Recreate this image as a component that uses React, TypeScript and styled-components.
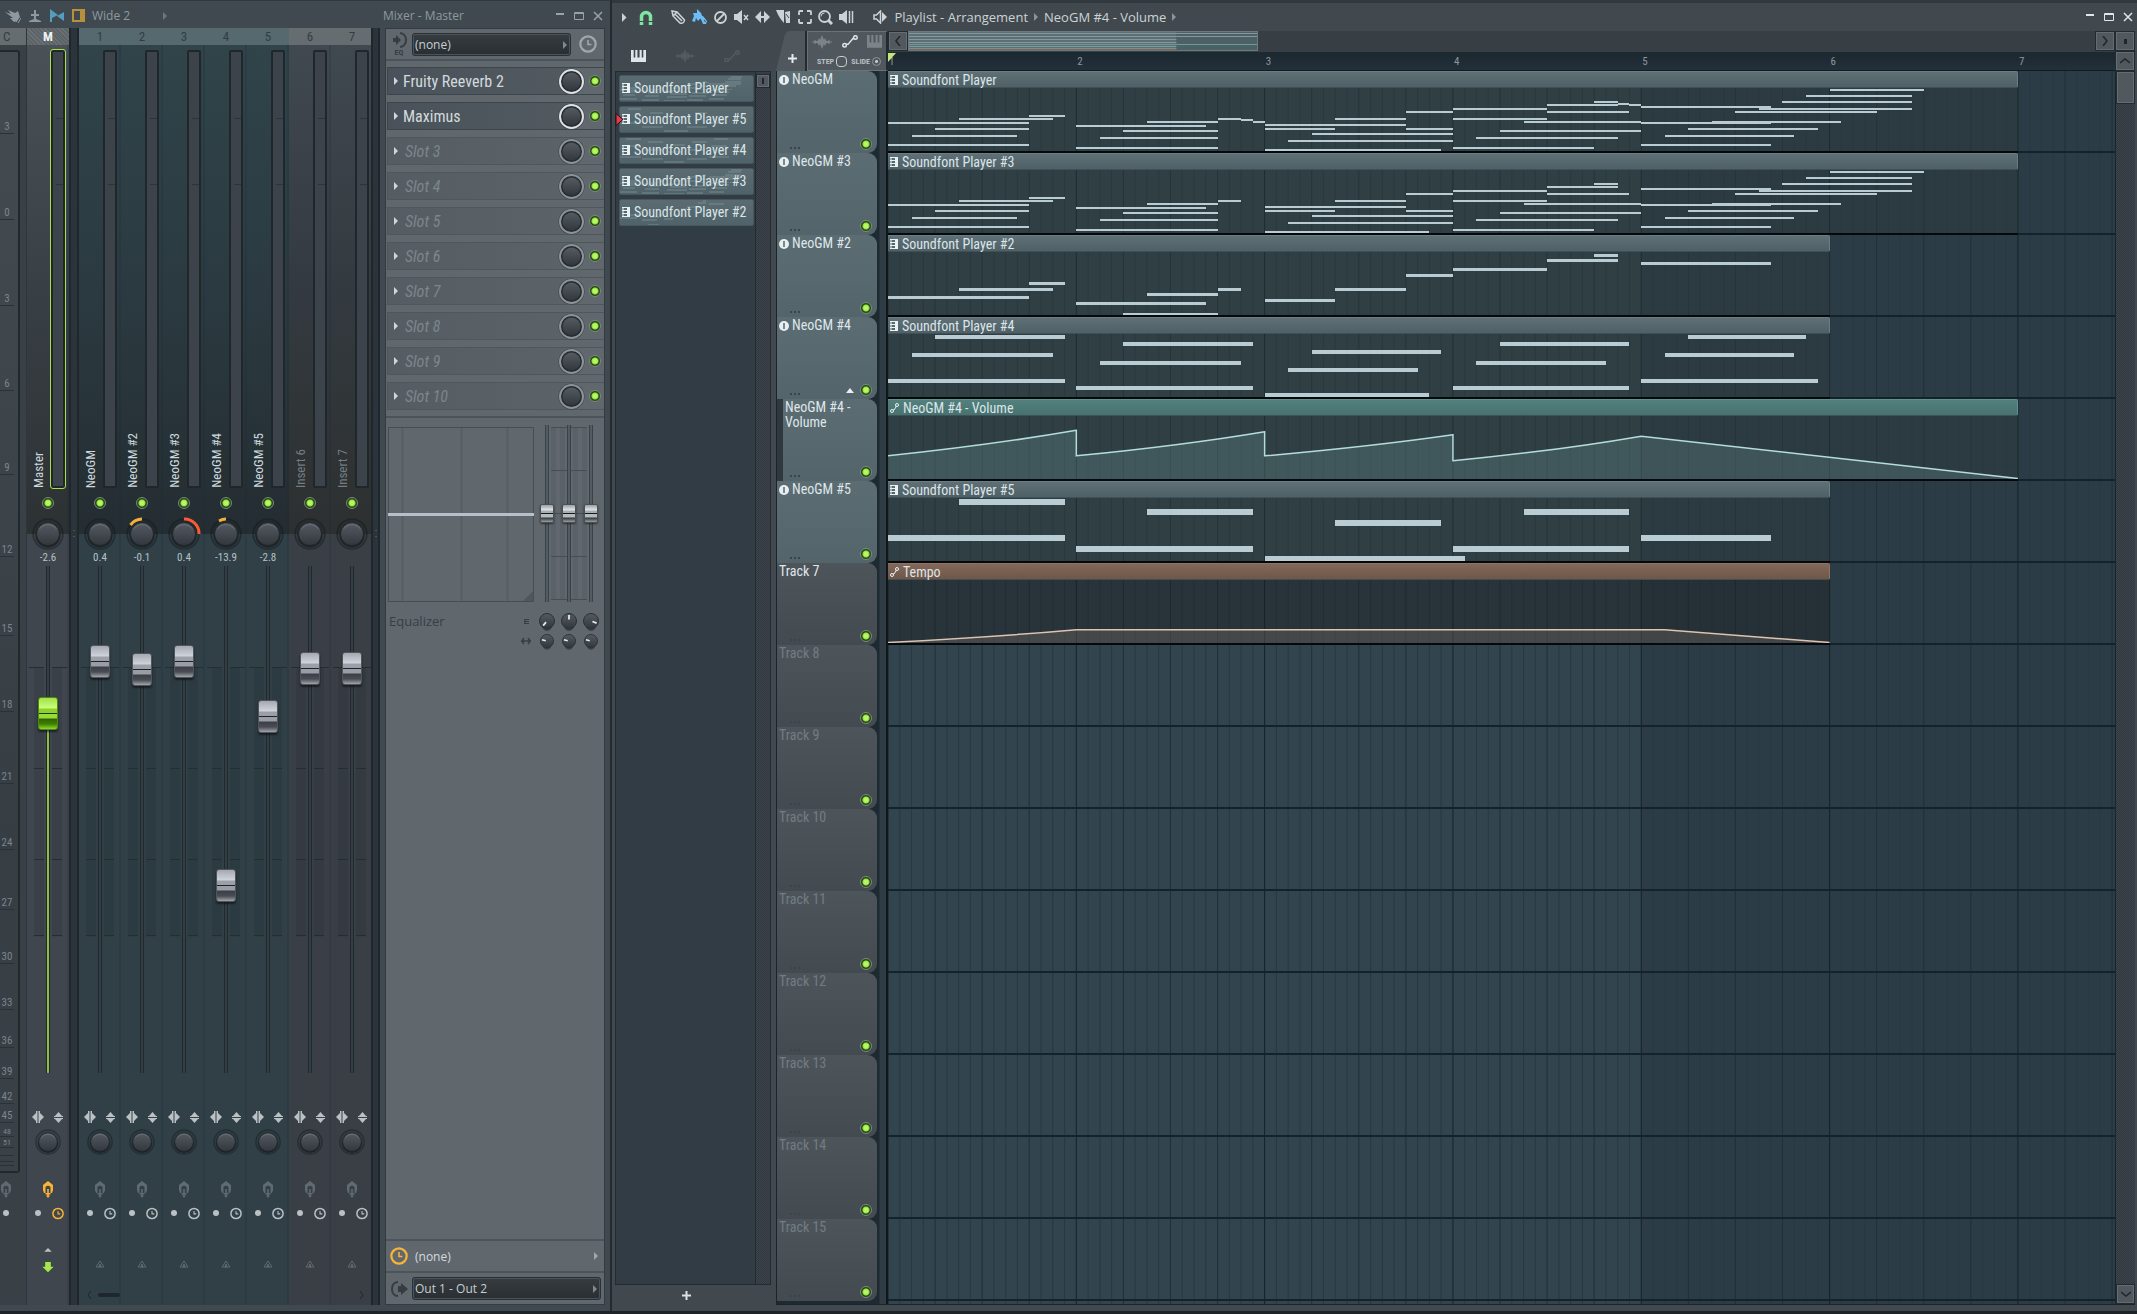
import React from "react";
import styled, { createGlobalStyle, css } from "styled-components";

const GlobalStyle = createGlobalStyle`
  * { box-sizing: border-box; }
  html, body, #root { height: 100%; }
  body {
    margin: 0;
    background: #1d2326;
    color: #c4cdd2;
    font-family: "Roboto Condensed", "Open Sans Condensed", "Liberation Sans Narrow", Roboto, sans-serif;
    font-size: 13px;
    overflow: hidden;
  }
  button, select, input { font: inherit; color: inherit; margin: 0; padding: 0; }
  button { background: none; border: 0; display: inline-flex; align-items: center; justify-content: center; }
  svg { display: block; }
  h1 { margin: 0; font: inherit; }
`;

/* ---------------------------------------------------------------- data */

type Note = [start: number, length: number, y: number];

const chordNotes: Note[] = [
  [0, 12, 52], [6, 8, 48], [12, 3, 45], [4, 8, 58], [2, 9, 65], [0, 12, 74],
  [16, 11, 55], [22, 6, 51], [28, 2, 48], [20, 8, 60], [18, 10, 67], [16, 12, 77],
  [32, 6, 54], [32, 6, 58], [38, 6, 48], [38, 6, 54], [36, 12, 63], [34, 14, 70], [32, 14, 79],
  [44, 4, 41], [44, 4, 58], [48, 8, 38], [48, 8, 48], [56, 6, 34], [60, 2, 31], [56, 7, 41],
  [54, 10, 51], [52, 12, 60], [50, 12, 67], [48, 12, 77],
  [64, 11, 36], [64, 11, 52], [70, 11, 51], [68, 11, 58], [66, 11, 65], [64, 11, 74],
  [72, 12, 41], [74, 13, 38], [76, 11, 31], [78, 9, 25], [80, 8, 19],
];
const leadNotes: Note[] = [...chordNotes, [30, 1, 49], [31, 1, 51], [46, 1, 79], [62, 1, 33], [63, 1, 34]];
const melodyNotes: Note[] = [
  [0, 12, 62], [6, 8, 54], [12, 3, 48], [16, 11, 68], [22, 6, 59], [28, 2, 54], [20, 8, 79],
  [32, 6, 65], [38, 6, 54], [44, 4, 40], [48, 8, 34], [56, 6, 25], [60, 2, 20], [64, 11, 28],
];
const padNotes: Note[] = [
  [0, 15, 64], [2, 12, 38], [4, 11, 20], [16, 15, 71], [18, 12, 46], [20, 11, 27],
  [32, 14, 78], [34, 11, 53], [36, 11, 35], [48, 15, 71], [50, 11, 46], [52, 11, 27],
  [64, 15, 64], [66, 11, 38], [68, 10, 20],
];
const bassNotes: Note[] = [
  [6, 9, 21], [0, 15, 57], [22, 9, 31], [16, 15, 68], [38, 9, 42], [32, 17, 78],
  [54, 9, 31], [48, 15, 68], [64, 11, 57],
];

const volumeLine =
  "M0 57.5 Q9 46 16 31.5 V57.5 Q25 47 32 33 V57.5 Q41 48 48 36 V62.5 Q57 52 64 37.5 L96 80.5";
const tempoLine = "M0 80.5 Q9 75 16 67.5 H66 L80 80.5";

type Tone = "steel" | "teal" | "brown";
interface Clip { name: string; length: number; tone: Tone; notes?: Note[]; thick?: number; line?: string }
interface Track { name: string; kind: "midi" | "sub" | "plain" | "empty"; expand?: boolean; clip?: Clip }

const tracks: Track[] = [
  { name: "NeoGM", kind: "midi", clip: { name: "Soundfont Player", length: 96, tone: "steel", notes: leadNotes, thick: 2 } },
  { name: "NeoGM #3", kind: "midi", clip: { name: "Soundfont Player #3", length: 96, tone: "steel", notes: chordNotes, thick: 2 } },
  { name: "NeoGM #2", kind: "midi", clip: { name: "Soundfont Player #2", length: 80, tone: "steel", notes: melodyNotes, thick: 3 } },
  { name: "NeoGM #4", kind: "midi", expand: true, clip: { name: "Soundfont Player #4", length: 80, tone: "steel", notes: padNotes, thick: 4 } },
  { name: "NeoGM #4 - Volume", kind: "sub", clip: { name: "NeoGM #4 - Volume", length: 96, tone: "teal", line: volumeLine } },
  { name: "NeoGM #5", kind: "midi", clip: { name: "Soundfont Player #5", length: 80, tone: "steel", notes: bassNotes, thick: 6 } },
  { name: "Track 7", kind: "plain", clip: { name: "Tempo", length: 80, tone: "brown", line: tempoLine } },
  ...[8, 9, 10, 11, 12, 13, 14, 15].map((n): Track => ({ name: `Track ${n}`, kind: "empty" })),
];

const patterns = [
  { name: "Soundfont Player", notes: leadNotes },
  { name: "Soundfont Player #5", notes: bassNotes, current: true },
  { name: "Soundfont Player #4", notes: padNotes },
  { name: "Soundfont Player #3", notes: chordNotes },
  { name: "Soundfont Player #2", notes: melodyNotes },
];

type StripTone = "master" | "used" | "free";
interface StripData { head: string; name: string; tone: StripTone; db?: string; level: number; pan?: [string, string] }

const master: StripData = { head: "M", name: "Master", tone: "master", db: "-2.6", level: 724 };
const inserts: StripData[] = [
  { head: "1", name: "NeoGM", tone: "used", db: "0.4", level: 834 },
  { head: "2", name: "NeoGM #2", tone: "used", db: "-0.1", level: 816, pan: ["#f5ae36", "M4.5 7 A14.5 14.5 0 0 1 16 1"] },
  { head: "3", name: "NeoGM #3", tone: "used", db: "0.4", level: 834, pan: ["#fb5b34", "M16 1 A14.5 14.5 0 0 1 31 16"] },
  { head: "4", name: "NeoGM #4", tone: "used", db: "-13.9", level: 360, pan: ["#f5ae36", "M9 3 A14.5 14.5 0 0 1 16 1"] },
  { head: "5", name: "NeoGM #5", tone: "used", db: "-2.8", level: 718 },
  { head: "6", name: "Insert 6", tone: "free", level: 818 },
  { head: "7", name: "Insert 7", tone: "free", level: 818 },
];

const scale: [string, number][] = [
  ["3", 82], ["0", 86], ["3", 86], ["6", 85], ["9", 84], ["12", 82], ["15", 79], ["18", 76], ["21", 72],
  ["24", 66], ["27", 60], ["30", 54], ["33", 46], ["36", 38], ["39", 31], ["42", 25], ["45", 19],
  ["48", 14], ["51", 11], ["", 8], ["", 6], ["", 4],
];

const slots = ["Fruity Reeverb 2", "Maximus", ...[3, 4, 5, 6, 7, 8, 9, 10].map((n) => `Slot ${n}`)];

/* ------------------------------------------------------- shared pieces */

const Led = styled.input.attrs({ type: "checkbox", defaultChecked: true })`
  appearance: none;
  width: 12px;
  height: 12px;
  flex: none;
  border-radius: 50%;
  border: 1px solid #7b8588;
  background: #27331c;
  &:checked { background: radial-gradient(circle, #b9f56a 0 2px, #8fdc3c 3px, #234a0a 4px); }
`;

const KnobBox = styled.label<{ $size: number }>`
  position: relative;
  display: block;
  flex: none;
  width: ${(p) => p.$size}px;
  height: ${(p) => p.$size}px;
  svg { width: 100%; height: 100%; overflow: visible; }
`;
const HiddenRange = styled.input.attrs({ type: "range" })`
  position: absolute;
  inset: 0;
  width: 100%;
  height: 100%;
  opacity: 0;
`;

const SharedDefs = styled.svg`
  position: absolute;
`;
const KnobDefs = () => (
  <SharedDefs width="0" height="0" aria-hidden="true">
    <defs>
      <linearGradient id="knobFace" x1="0" y1="0" x2="0" y2="1">
        <stop offset="0" stopColor="#555b62" />
        <stop offset="1" stopColor="#32373d" />
      </linearGradient>
    </defs>
  </SharedDefs>
);

function Knob({ label, size, pan }: { label: string; size: number; pan?: [string, string] }) {
  return (
    <KnobBox $size={size}>
      <svg viewBox="0 0 32 32">
        <circle cx="16" cy="16" r="15" fill="rgba(0,0,0,.08)" stroke="rgba(18,26,30,.45)" strokeWidth="1.5" />
        {pan && <path d={pan[1]} fill="none" stroke={pan[0]} strokeWidth="3" />}
        <circle cx="16" cy="17" r="12.5" fill="#1d2226" />
        <circle cx="16" cy="16" r="11.5" fill="url(#knobFace)" stroke="#22272b" strokeWidth="1" />
        <path d="M7.5 11 A10.5 10.5 0 0 1 24.5 11" fill="none" stroke="#6a7177" strokeWidth="1" />
      </svg>
      <HiddenRange aria-label={label} />
    </KnobBox>
  );
}

const Triangle = ({ color = "#c9d0d3", size = 8 }: { color?: string; size?: number }) => (
  <svg width={size / 2} height={size} viewBox="0 0 4 8"><path d="M0 0 L4 4 L0 8Z" fill={color} /></svg>
);

const ClockIcon = ({ size, color, width = 2 }: { size: number; color: string; width?: number }) => (
  <svg width={size} height={size} viewBox="0 0 16 16" fill="none" stroke={color} strokeWidth={width}>
    <circle cx="8" cy="8" r="6.8" />
    <path d="M8 4.5 V8.5 H11" strokeWidth={1.4} />
  </svg>
);

const PlugIcon = ({ color }: { color: string }) => (
  <svg width="12" height="18" viewBox="0 0 12 18">
    <path d="M6 0 L11 4 V9 L10 12 H8.500 V6 Q6 3.500 3.500 6 V12 H2 L1 9 V4Z" fill={color} />
    <path d="M5.200 8H6.800V12H8.500V13.500H6.800V14.500H8L6 17L4 14.500H5.200V13.500H3.500V12H5.200Z" fill={color} />
  </svg>
);

const PianoIcon = ({ color, size = 14 }: { color: string; size?: number }) => (
  <svg width={size} height={size * 0.86} viewBox="0 0 14 12">
    <path d="M0 0 H2.5 V7 H4 V0 H6 V7 H8 V0 H10 V7 H11.5 V0 H14 V12 H0Z" fill={color} />
  </svg>
);
const WaveIcon = ({ color }: { color: string }) => (
  <svg width="20" height="14" viewBox="0 0 20 14" fill={color}>
    <path d="M0 6.500H2L3 4.500L4 6H5.500L7 3L8 5L10 0L12 5L13 3L14.500 6H16L17 4.500L18 6.500H20V7.500H18L17 9.500L16 8H14.500L13 11L12 9L10 14L8 9L7 11L5.500 8H4L3 9.500L2 7.500H0Z" />
  </svg>
);
const AutoIcon = ({ color, size = 16 }: { color: string; size?: number }) => (
  <svg width={size} height={size * 0.8} viewBox="0 0 16 13" fill="none" stroke={color} strokeWidth="1.5">
    <circle cx="2.5" cy="10.5" r="1.8" />
    <circle cx="13.5" cy="2.5" r="1.8" />
    <path d="M4 9.5 H6 L11 3.5 H12" />
  </svg>
);
const ClipAutoIcon = () => (
  <svg width="9" height="10" viewBox="0 0 9 10" fill="none" stroke="#e8f2f5">
    <circle cx="2" cy="8" r="1.500" />
    <circle cx="7" cy="2" r="1.500" />
    <path d="M3 7H4L6 4V3" />
  </svg>
);

const WindowButtons = styled.div`
  display: flex;
  align-items: center;
  gap: 8px;
  margin-left: auto;
  button { width: 11px; height: 12px; }
`;
function WindowControls({ color }: { color: string }) {
  return (
    <WindowButtons>
      <button aria-label="Minimize"><svg width="8" height="10" viewBox="0 0 8 10"><path d="M0 3H8" stroke={color} strokeWidth="2" /></svg></button>
      <button aria-label="Maximize"><svg width="10" height="8" viewBox="0 0 10 8" fill="none" stroke={color}><path d="M.5.5H9.5V7.5H.5Z M0 1.5H10" /></svg></button>
      <button aria-label="Close"><svg width="10" height="10" viewBox="0 0 10 10" stroke={color} strokeWidth="1.5"><path d="M1 1L9 9M9 1L1 9" /></svg></button>
    </WindowButtons>
  );
}

/* --------------------------------------------------------------- mixer */

const Desktop = styled.main`
  display: flex;
  height: 100vh;
  padding-bottom: 3px;
`;

const Mixer = styled.section`
  flex: none;
  width: 612px;
  display: flex;
  flex-direction: column;
  background: #40494f;
  border-top: 1px solid #30393d;
  border-right: 2px solid #222b30;
  padding-bottom: 6px;
`;
const MixerTitle = styled.header`
  height: 27px;
  flex: none;
  display: flex;
  align-items: center;
  padding: 2px 7px 0 4px;
  color: #8e999f;
  font-family: "Open Sans", sans-serif;
  font-size: 12px;
`;
const MixerTools = styled.div`
  display: flex;
  align-items: center;
  gap: 5px;
  width: 379px;
  button { width: 17px; height: 18px; }
`;
const LayoutMenu = styled.span`
  display: flex;
  align-items: center;
  justify-content: space-between;
  width: 75px;
`;
const MixerBody = styled.div`
  flex: 1;
  min-height: 0;
  display: flex;
`;

const CurrentColumn = styled.div`
  width: 27px;
  flex: none;
  display: flex;
  flex-direction: column;
  background: #394046;
  border-right: 1px solid #2f363b;
`;
const StripHead = styled.div<{ $tone: StripTone }>`
  height: 17px;
  flex: none;
  width: 100%;
  text-align: center;
  font-size: 13px;
  line-height: 17px;
  color: #343d42;
  background: ${(p) => (p.$tone === "used" ? "#55696f" : "#666d71")};
  ${(p) => p.$tone === "master" && css`
    color: #eef2f3;
    font-weight: 700;
    background: repeating-linear-gradient(45deg, #6b7276 0 1px, #5d6468 1px 3px);
  `}
`;
const CurrentHead = styled(StripHead)`
  text-align: left;
  padding-left: 3px;
`;
const ScaleBox = styled.div`
  flex: 1;
  margin-top: 5px;
  width: 20px;
  border: 2px solid #22292e;
  border-left: 0;
  border-radius: 0 3px 3px 0;
  background: linear-gradient(#444b51, #363d43 70%, #3a4147);
`;
const ScaleRow = styled.div<{ $height: number }>`
  height: ${(p) => p.$height}px;
  width: 14px;
  border-bottom: 1px solid #2a3137;
  display: flex;
  align-items: flex-end;
  justify-content: center;
  font-size: ${(p) => (p.$height < 15 ? 8 : 11)}px;
  line-height: ${(p) => (p.$height < 15 ? 9 : 13)}px;
  color: #7b868d;
`;
const CurrentFoot = styled.div`
  height: 132px;
  width: 12px;
  padding-top: 8px;
  display: flex;
  flex-direction: column;
  align-items: center;
  gap: 11px;
`;

const stripPaint = {
  master: css`background: linear-gradient(#4a5257, #3a4147 45%, #2c3133) 0 17px / 100% 489px no-repeat, #40464d;`,
  used: css`background: linear-gradient(#30444a, #2b3a41 50%, #242d31) 0 17px / 100% 489px no-repeat, #304046;`,
  free: css`background: linear-gradient(#414950, #343b41 45%, #2d3030) 0 17px / 100% 489px no-repeat, #393f45;`,
};
const StripBox = styled.article<{ $tone: StripTone }>`
  flex: none;
  width: 42px;
  display: flex;
  flex-direction: column;
  align-items: center;
  ${(p) => stripPaint[p.$tone]}
  box-shadow: inset -2px 0 rgba(20, 40, 60, 0.18);
`;
const NameRow = styled.div`
  height: 443px;
  flex: none;
  width: 100%;
  display: flex;
  justify-content: space-between;
  align-items: flex-end;
  padding: 5px 4px 0 3px;
`;
const StripName = styled.div<{ $dim: boolean }>`
  writing-mode: vertical-rl;
  transform: rotate(180deg);
  font-size: 13px;
  line-height: 18px;
  white-space: nowrap;
  color: ${(p) => (p.$dim ? "#737d82" : "#ccd8dd")};
`;
const Meter = styled.div<{ $master: boolean }>`
  width: 14px;
  height: 438px;
  background: linear-gradient(
    transparent 66px, #2c3339 66px 67px, transparent 67px 132px, #2c3339 132px 133px, transparent 133px
  ) 3px 0 / 7px 100% no-repeat, #3d434a;
  border: 2px solid #1f272b;
  border-radius: 2px;
  ${(p) => p.$master && css`outline: 1px solid #a4e04a;`}
`;
const LedCell = styled.div`
  height: 30px;
  flex: none;
  display: flex;
  align-items: center;
`;
const Decibels = styled.output`
  height: 16px;
  flex: none;
  font-size: 11px;
  line-height: 15px;
  color: #b6c1c6;
`;
const band = (c: string) =>
  `linear-gradient(90deg, transparent 7px, ${c} 7px 17px, transparent 17px 25px, ${c} 25px 35px, transparent 35px)`;
const FaderCell = styled.div`
  flex: 1;
  min-height: 0;
  width: 100%;
  display: flex;
  justify-content: center;
  background:
    linear-gradient(90deg, transparent 2px, #242d32 2px 17px, transparent 17px 25px, #242d32 25px 40px, transparent 40px) 0 20% / 100% 1px no-repeat,
    ${band("#242d32")} 0 40% / 100% 1px no-repeat,
    ${band("#242d32")} 0 58% / 100% 1px no-repeat,
    ${band("#242d32")} 0 73% / 100% 1px no-repeat,
    ${band("rgba(20,28,34,.14)")} 0 43% / 100% 53% no-repeat;
`;
const Fader = styled.input.attrs({ type: "range", min: 0, max: 1000 })<{ $green?: boolean; $fill?: number }>`
  appearance: none;
  writing-mode: vertical-lr;
  direction: rtl;
  width: 20px;
  height: 100%;
  background:
    ${(p) => p.$green && `linear-gradient(#8cbf42, #8cbf42) 50% 100% / 2px ${p.$fill}% no-repeat,`}
    linear-gradient(90deg, #20292e 1px, #333e44 1px 3px, #20292e 3px) 50% 0 / 4px 100% no-repeat;
  &::-webkit-slider-runnable-track { width: 20px; background: none; }
  &::-webkit-slider-thumb {
    appearance: none;
    width: 20px;
    height: 33px;
    border-radius: 3px;
    border: 1px solid ${(p) => (p.$green ? "#4e8a0c" : "#50565c")};
    box-shadow: 0 2px 2px rgba(0, 0, 0, 0.5);
    background: ${(p) =>
      p.$green
        ? "linear-gradient(#a4e04a 0, #c8ff7a 10px, #8ed02e 11px 15px, #1f3a06 15px 16px, #98dc3c 16px 20px, #2f6400 21px, #3f8000 26px, #8ed63a)"
        : "linear-gradient(#a5a8b0 0, #cfd3dc 10px, #9b9fa8 11px 15px, #1f2226 15px 16px, #9a9da6 16px 20px, #3c3e46 21px, #4a4d55 26px, #a2a4ac)"};
  }
`;
const IconPair = styled.div`
  height: 16px;
  flex: none;
  width: 36px;
  display: flex;
  align-items: center;
  justify-content: space-between;
  padding: 0 2px;
  button { width: 12px; height: 14px; }
`;
const Gap = styled.div<{ $h: number }>`
  height: ${(p) => p.$h}px;
  flex: none;
`;
const OutCell = styled.div`
  height: 24px;
  flex: none;
  display: flex;
  flex-direction: column;
  justify-content: flex-end;
  align-items: center;
  gap: 10px;
`;
const Divider = styled.div<{ $w: number }>`
  width: ${(p) => p.$w}px;
  flex: none;
  background: radial-gradient(circle, #4a545b 1px, transparent 1px) 50% 500px / 4px 5px no-repeat,
    radial-gradient(circle, #4a545b 1px, transparent 1px) 50% 506px / 4px 5px no-repeat, #2b343a;
  border: solid #1f272c;
  border-width: 0 2px;
`;
const Inserts = styled.div`
  position: relative;
  width: 292px;
  flex: none;
  display: flex;
  overflow: hidden;
`;
const StripScroll = styled.div`
  position: absolute;
  left: 0;
  right: 0;
  bottom: 3px;
  display: flex;
  align-items: center;
  justify-content: space-between;
  padding: 0 6px;
  button { width: 8px; height: 14px; }
`;
const StripThumb = styled.div`
  width: 22px;
  height: 4px;
  border-radius: 2px;
  margin: 0 auto 0 5px;
  background: #1d272d;
`;

function Strip({ data }: { data: StripData }) {
  const isMaster = data.tone === "master";
  return (
    <StripBox $tone={data.tone} aria-label={data.name}>
      <StripHead $tone={data.tone}>{data.head}</StripHead>
      <NameRow>
        <StripName $dim={data.tone === "free"}>{data.name}</StripName>
        <Meter $master={isMaster} />
      </NameRow>
      <LedCell><Led aria-label={`${data.name} enabled`} /></LedCell>
      <Knob size={32} label={`${data.name} pan`} pan={data.pan} />
      <Decibels>{data.db}</Decibels>
      <FaderCell>
        <Fader aria-label={`${data.name} volume`} defaultValue={data.level} $green={isMaster} $fill={data.level / 10 - 3} />
      </FaderCell>
      <Gap $h={36} />
      <IconPair>
        <button aria-label="Swap channels">
          <svg width="12" height="12" viewBox="0 0 12 12" fill="#b9c1c4"><path d="M5.500 0V12H4V10L0 6L4 2V0ZM6.500 0V12H8V10L12 6L8 2V0Z" /></svg>
        </button>
        <button aria-label="Invert phase">
          <svg width="9" height="11" viewBox="0 0 9 11" fill="#b9c1c4"><path d="M4.500 0L8 4H9V5H0V4H1ZM4.500 11L8 7H9V6H0V7H1Z" /></svg>
        </button>
      </IconPair>
      <Gap $h={4} />
      <Knob size={26} label={`${data.name} stereo separation`} />
      <Gap $h={26} />
      <PlugIcon color={isMaster ? "#f7b437" : "#5f6b70"} />
      <Gap $h={6} />
      <IconPair>
        <button aria-label="Arm recording"><svg width="6" height="6"><circle cx="3" cy="3" r="3" fill="#b9c1c4" /></svg></button>
        <button aria-label="Latency"><ClockIcon size={13} color={isMaster ? "#f7b437" : "#b9c1c4"} /></button>
      </IconPair>
      <Gap $h={27} />
      <OutCell>
        {isMaster ? (
          <>
            <svg width="8" height="4" viewBox="0 0 8 4"><path d="M0 4L4 0L8 4Z" fill="#b9c1c4" /></svg>
            <svg width="12" height="11" viewBox="0 0 12 11"><path d="M3 0H9V5H12L6 11L0 5H3Z" fill="#a4e84a" /></svg>
          </>
        ) : (
          <svg width="10" height="12" viewBox="0 0 10 12" fill="none" stroke="#5f6b70"><path d="M5 1L9 7H1Z" /><path d="M5 4L6 7H4Z" /></svg>
        )}
      </OutCell>
      <Gap $h={33} />
    </StripBox>
  );
}

/* --------------------------------------------------- effects side panel */

const Rack = styled.aside`
  flex: 1;
  min-width: 0;
  margin: 0 5px 0 5px;
  border: 1px solid #333c41;
  background: #60686e;
  display: flex;
  flex-direction: column;
`;
const RackRow = styled.div`
  height: 32px;
  flex: none;
  display: flex;
  align-items: center;
  gap: 4px;
  padding: 0 3px 0 4px;
  border-bottom: 2px solid #4c545a;
`;
const IconCell = styled.span`
  width: 18px;
  display: flex;
  flex-direction: column;
  align-items: center;
  font-size: 8px;
  font-weight: 700;
  line-height: 9px;
  color: #353d42;
`;
const SelectBox = styled.label`
  position: relative;
  flex: 1;
  display: flex;
  svg { position: absolute; right: 4px; top: 8px; pointer-events: none; }
`;
const DarkSelect = styled.select`
  appearance: none;
  width: 100%;
  height: 23px;
  padding: 0 1px;
  border: 2px solid #4a5358;
  outline: 1px solid #2a3135;
  outline-offset: -1px;
  border-radius: 3px;
  background: linear-gradient(#353b3f, #2a2f33);
  color: #c7ced2;
  font-family: "Open Sans", sans-serif;
  font-size: 12px;
`;
const SlotList = styled.ol`
  list-style: none;
  margin: 0;
  padding: 6px 0 6px;
  display: flex;
  flex-direction: column;
  gap: 7px;
  border-bottom: 2px solid #4c545a;
`;
const SlotItem = styled.li<{ $used: boolean }>`
  height: 28px;
  display: flex;
  align-items: center;
  padding: 0 3px 0 6px;
  border: 1px solid ${(p) => (p.$used ? "#3d464b" : "#4e575c")};
  border-right: 0;
  margin-left: 1px;
  background: linear-gradient(90deg, ${(p) => (p.$used ? "#49525a, #525a60" : "#555d63, #5b6369")} 180px, transparent 180px);
`;
const SlotName = styled.button<{ $used: boolean }>`
  flex: 1;
  justify-content: flex-start;
  padding-left: ${(p) => (p.$used ? 5 : 7)}px;
  font-size: 16px;
  font-style: ${(p) => (p.$used ? "normal" : "italic")};
  color: ${(p) => (p.$used ? "#d3dadd" : "#7d868b")};
`;
const RingKnob = ({ bright, label }: { bright: boolean; label: string }) => (
  <KnobBox $size={27}>
    <svg viewBox="0 0 27 27">
      <circle cx="13.5" cy="13.5" r="13" fill="#394046" />
      <circle cx="13.5" cy="13.5" r="11.5" fill="#262b30" stroke={bright ? "#dde2e4" : "#8d9498"} strokeWidth="2" />
      <circle cx="13.5" cy="13.5" r="9" fill="url(#knobFace)" />
    </svg>
    <HiddenRange aria-label={label} />
  </KnobBox>
);
const LedSpacer = styled.span`
  display: flex;
  margin-left: 4px;
`;
const EqArea = styled.div`
  display: flex;
  justify-content: space-between;
  padding: 7px 6px 0 2px;
`;
const EqGraph = styled.svg`
  width: 146px;
  height: 175px;
  margin-top: 2px;
`;
const EqBands = styled.div`
  display: flex;
  gap: 8px;
  background:
    linear-gradient(#454e53, #454e53) 50% 2px / 36px 1px no-repeat,
    linear-gradient(#454e53, #454e53) 50% 45px / 36px 1px no-repeat,
    linear-gradient(#454e53, #454e53) 50% 88px / 36px 1px no-repeat,
    linear-gradient(#454e53, #454e53) 50% 131px / 36px 1px no-repeat,
    linear-gradient(#454e53, #454e53) 50% 174px / 36px 1px no-repeat,
    linear-gradient(90deg, #5a6268 5px, transparent 5px 9px, #5a6268 9px 14px, transparent 14px 22px, #5a6268 22px 27px, transparent 27px 31px, #5a6268 31px) 50% 3px / 36px 172px no-repeat;
`;
const EqBand = styled.input.attrs({ type: "range", defaultValue: 50 })`
  appearance: none;
  writing-mode: vertical-lr;
  width: 14px;
  height: 177px;
  background: linear-gradient(90deg, #394247 1px, #535c62 1px 3px, #394247 3px) 50% 0 / 4px 100% no-repeat;
  &::-webkit-slider-runnable-track { width: 14px; background: none; }
  &::-webkit-slider-thumb {
    appearance: none;
    width: 14px;
    height: 19px;
    border-radius: 2px;
    border: 1px solid #4a5054;
    box-shadow: 0 1px 2px rgba(0, 0, 0, 0.5);
    background: linear-gradient(#9aa0a4, #e0e5e8 5px, #a7adb1 6px 8px, #15181a 8px 9px, #b5babd 9px 12px, #33383c 13px, #9aa0a4);
  }
`;
const EqFooter = styled.div`
  display: grid;
  grid-template-columns: 1fr 20px repeat(3, 22px);
  grid-auto-rows: 20px;
  align-items: center;
  justify-items: center;
  padding: 9px 2px 0 3px;
  color: #373f44;
  font-family: "Open Sans", sans-serif;
  font-size: 13px;
`;
const EqTitle = styled.span`
  justify-self: start;
`;
const EqDial = ({ size, angle, label }: { size: number; angle: number; label: string }) => (
  <KnobBox $size={size}>
    <svg viewBox="0 0 16 16">
      <ellipse cx="8" cy="11" rx="5.5" ry="7" fill="#3a4146" />
      <circle cx="8" cy="8" r="7.5" fill="url(#knobFace)" stroke="#2b3135" />
      <path d="M8 2V6.5" stroke="#e6eaec" strokeWidth="1.8" transform={`rotate(${angle} 8 8)`} />
    </svg>
    <HiddenRange aria-label={label} />
  </KnobBox>
);
const RackFooter = styled.div`
  margin-top: auto;
  border-top: 2px solid #4c545a;
`;
const FooterLine = styled(RackRow)`
  font-family: "Open Sans", sans-serif;
  font-size: 12px;
  color: #d3dadd;
  justify-content: space-between;
  &:last-child { border-bottom: 0; height: 31px; }
`;
const LinkButton = styled.button`
  flex: 1;
  justify-content: space-between;
  padding: 0 3px;
`;
const ClockButton = styled.button`
  width: 26px;
  height: 22px;
`;

function EffectsRack() {
  return (
    <Rack>
      <RackRow>
        <IconCell>
          <svg width="15" height="16" viewBox="0 0 15 16">
            <path d="M1 6H4V3L9 8L4 13V10H1Z" fill="#353d42" />
            <path d="M8 1C16 2 16 14 8 15" fill="none" stroke="#353d42" strokeWidth="2" />
          </svg>
          EQ
        </IconCell>
        <SelectBox>
          <DarkSelect aria-label="Mixer input"><option>(none)</option></DarkSelect>
          <Triangle color="#81898e" />
        </SelectBox>
        <ClockButton aria-label="Input latency">
          <ClockIcon size={18} color="#a1a8ac" />
        </ClockButton>
      </RackRow>
      <SlotList>
        {slots.map((name, i) => (
          <SlotItem key={name} $used={i < 2}>
            <Triangle color="#d0d6d9" />
            <SlotName $used={i < 2}>{name}</SlotName>
            <RingKnob bright={i < 2} label={`${name} mix`} />
            <LedSpacer><Led aria-label={`${name} enabled`} /></LedSpacer>
          </SlotItem>
        ))}
      </SlotList>
      <EqArea>
        <EqGraph viewBox="0 0 146 175">
          <path d="M14.5 0V175M73.5 0V175M119.5 0V175" stroke="#575f65" strokeWidth="2" />
          <path d="M145 164V174H135Z" fill="#50585e" />
          <rect x=".5" y=".5" width="145" height="174" fill="none" stroke="#454e53" />
          <path d="M0 87.5H146" stroke="#b7bfc8" strokeWidth="3" />
        </EqGraph>
        <EqBands>
          {["Low", "Mid", "High"].map((b) => <EqBand key={b} aria-label={`${b} gain`} />)}
        </EqBands>
      </EqArea>
      <EqFooter>
        <EqTitle>Equalizer</EqTitle>
        <svg width="5" height="5" viewBox="0 0 5 5" stroke="#373f44"><path d="M0 .5H5M0 2.5H5M0 4.5H5M1 0V5" /></svg>
        {[-140, 0, 110].map((a) => <EqDial key={a} size={16} angle={a} label="Band frequency" />)}
        <span />
        <svg width="10" height="8" viewBox="0 0 10 8" fill="none" stroke="#373f44" strokeWidth="1.5"><path d="M0 4H10M3 1L.7 4L3 7M7 1L9.3 4L7 7" /></svg>
        {[1, 2, 3].map((a) => <EqDial key={a} size={14} angle={-75} label="Band width" />)}
      </EqFooter>
      <RackFooter>
        <FooterLine>
          <IconCell><ClockIcon size={18} color="#f7b437" /></IconCell>
          <LinkButton>(none)<Triangle color="#a1a8ac" /></LinkButton>
        </FooterLine>
        <FooterLine>
          <IconCell>
            <svg width="18" height="18" viewBox="0 0 18 18"><path d="M8 2C0 2 0 16 8 16" fill="none" stroke="#353d42" strokeWidth="2" /><path d="M8 6H11V3L18 9L11 15V12H8Z" fill="#353d42" /></svg>
          </IconCell>
          <SelectBox>
            <DarkSelect aria-label="Mixer output"><option>Out 1 - Out 2</option></DarkSelect>
            <Triangle color="#81898e" />
          </SelectBox>
        </FooterLine>
      </RackFooter>
    </Rack>
  );
}

function MixerWindow() {
  return (
    <Mixer aria-label="Mixer">
      <MixerTitle>
        <MixerTools>
          <button aria-label="Multi touch">
            <svg width="16" height="14" viewBox="0 0 16 14" fill="#8e999f"><path d="M0 3L6 5L3 1L10 4L13 2L15 8L12 12L9 13L5 9L8 9Z" /><path d="M13 10L11 13M16 9L13 14" stroke="#8e999f" /></svg>
          </button>
          <button aria-label="Inspector">
            <svg width="12" height="14" viewBox="0 0 12 14" fill="#8e999f"><path d="M5 1H7V5H10V7H7V10L12 12V13H0V12L5 10V7H2V5H5Z" /></svg>
          </button>
          <button aria-label="Waveform view">
            <svg width="14" height="13" viewBox="0 0 14 13" fill="#549cc0"><path d="M0 0L8 6L2 9V13H0ZM14 3V12L7 7Z" /></svg>
          </button>
          <button aria-label="Docked panel">
            <svg width="13" height="13" viewBox="0 0 13 13"><path d="M1 1H12V12H1Z" fill="none" stroke="#b8903c" strokeWidth="2" /><path d="M8 1V12H12V1Z" fill="#b8903c" /></svg>
          </button>
          <LayoutMenu>Wide 2<Triangle color="#6c777d" /></LayoutMenu>
        </MixerTools>
        <h1>Mixer - Master</h1>
        <WindowControls color="#98a2a7" />
      </MixerTitle>
      <MixerBody>
        <CurrentColumn>
          <CurrentHead $tone="free">C</CurrentHead>
          <ScaleBox>
            {scale.map(([label, h], i) => <ScaleRow key={i} $height={h}>{label}</ScaleRow>)}
          </ScaleBox>
          <CurrentFoot>
            <PlugIcon color="#5f6b70" />
            <svg width="6" height="6"><circle cx="3" cy="3" r="3" fill="#b9c1c4" /></svg>
          </CurrentFoot>
        </CurrentColumn>
        <Strip data={master} />
        <Divider $w={10} />
        <Inserts>
          {inserts.map((s) => <Strip key={s.name} data={s} />)}
          <StripScroll>
            <button aria-label="Scroll left"><svg width="5" height="8" viewBox="0 0 5 8" fill="none" stroke="#1d272d"><path d="M4 0L1 4L4 8" /></svg></button>
            <StripThumb />
            <button aria-label="Scroll right"><svg width="5" height="8" viewBox="0 0 5 8" fill="none" stroke="#1d272d"><path d="M1 0L4 4L1 8" /></svg></button>
          </StripScroll>
        </Inserts>
        <Divider $w={9} />
        <EffectsRack />
      </MixerBody>
    </Mixer>
  );
}

/* ------------------------------------------------------------ playlist */

/* sixteenth steps that the lanes show at once */
const VISIBLE_STEPS = 104.25;

const Playlist = styled.section`
  flex: 1;
  min-width: 0;
  display: flex;
  flex-direction: column;
  background: #41494e;
  border-top: 3px solid #30393d;
  padding: 0 2px 6px 3px;
`;
const PlaylistTitle = styled.header`
  height: 28px;
  flex: none;
  display: flex;
  align-items: center;
  padding: 0 2px 0 7px;
  gap: 6px;
  color: #cbd3d7;
  font-family: "Open Sans", sans-serif;
  font-size: 13px;
`;
const ToolGroup = styled.div<{ $ml: number }>`
  display: flex;
  gap: 3px;
  margin-left: ${(p) => p.$ml}px;
  button { width: 18px; height: 18px; }
`;
const PlaylistBody = styled.div`
  flex: 1;
  min-height: 0;
  display: flex;
`;
const Picker = styled.aside`
  width: 156px;
  flex: none;
  display: flex;
  flex-direction: column;
`;
const PickerTabs = styled.div`
  height: 40px;
  flex: none;
  display: flex;
  align-items: flex-end;
  padding: 0 0 7px 11px;
  gap: 23px;
  button { width: 24px; height: 16px; }
`;
const PickerMain = styled.div`
  flex: 1;
  display: flex;
  border: 1px solid #222b30;
  background: #323c44;
`;
const PatternList = styled.ul`
  flex: 1;
  list-style: none;
  margin: 0;
  padding: 3px 1px 0 3px;
  display: flex;
  flex-direction: column;
  gap: 4px;
`;
const PatternItem = styled.li`
  position: relative;
  height: 27px;
  border: 1px solid #47575d;
  border-radius: 2px;
  background: linear-gradient(#5a6c72, #51636a);
  > svg { position: absolute; left: 0; top: 0; width: 100%; height: 100%; }
`;
const PatternButton = styled.button`
  position: relative;
  height: 23px;
  gap: 4px;
  padding-left: 2px;
  font-size: 14px;
  color: #dbe5e8;
  white-space: nowrap;
`;
const CurrentMark = styled.svg`
  && {
    left: -5px;
    top: 5px;
    width: 9px;
    height: 15px;
  }
`;
const hatch = "repeating-conic-gradient(#3d434a 0 25%, #32383f 0 50%) 0 0 / 2px 2px";
const PickerScroll = styled.div`
  width: 15px;
  border-left: 1px solid #222b30;
  background: ${hatch};
`;
const SmallButton = styled.button<{ $w?: number; $h?: number }>`
  width: ${(p) => p.$w ?? 20}px;
  height: ${(p) => p.$h ?? 20}px;
  flex: none;
  background: #51585e;
  border: 1px solid #222b30;
  box-shadow: inset 0 0 0 1px #656d72;
  color: #1f272c;
`;
const AddPattern = styled.button`
  height: 20px;
  flex: none;
  padding-right: 14px;
  color: #dde2e4;
`;

const Arrangement = styled.div`
  flex: 1;
  min-width: 0;
  margin-left: 5px;
  display: flex;
  flex-direction: column;
`;
const TopBar = styled.div`
  height: 40px;
  flex: none;
  display: flex;
`;
const AddTrack = styled.button`
  width: 31px;
  height: 40px;
  align-items: flex-end;
  padding: 0 0 8px 4px;
  color: #e6eaec;
  background: #50585d;
  clip-path: polygon(12px 0, 100% 0, 100% 100%, 0 100%, 9px 3px);
  border-right: 2px solid #222b30;
`;
const ToolBox = styled.div`
  width: 81px;
  flex: none;
  display: flex;
  flex-direction: column;
  background: #50585d;
  border: 1px solid #6a7277;
  border-right: 2px solid #222b30;
`;
const ToolIcons = styled.div`
  display: flex;
  align-items: center;
  justify-content: space-between;
  height: 19px;
  padding: 0 4px;
`;
const SnapOptions = styled.div`
  display: flex;
  align-items: center;
  justify-content: space-between;
  height: 19px;
  padding: 2px 5px 0 9px;
  font-size: 8px;
  font-weight: 700;
  color: #b5bec2;
  label { display: flex; align-items: center; gap: 2px; }
  input { appearance: none; margin: 0; }
`;
const StepBox = styled.input.attrs({ type: "checkbox" })`
  width: 11px;
  height: 11px;
  border: 1px solid #c6cdd0;
  border-radius: 4px;
`;
const SlideDot = styled.input.attrs({ type: "radio", defaultChecked: true })`
  width: 9px;
  height: 9px;
  border: 1px solid #8b9498;
  border-radius: 50%;
  background: radial-gradient(circle, #c6cdd0 0 1px, transparent 2px);
`;
const TimeArea = styled.div`
  flex: 1;
  min-width: 0;
  display: flex;
  flex-direction: column;
`;
const OverviewRow = styled.div`
  height: 21px;
  flex: none;
  display: flex;
  background: #373f44;
`;
const Overview = styled.div`
  width: 350px;
  margin-right: auto;
  height: 20px;
  border: 1px solid #6a7a80;
  background: #4d6066;
  svg { width: 100%; height: 100%; }
`;
const Ruler = styled.div`
  position: relative;
  flex: 1;
  display: flex;
  overflow: hidden;
  background: linear-gradient(#1c282f, #22303a);
  border-bottom: 1px solid #141b20;
  font-size: 11px;
  line-height: 19px;
  color: #8b979d;
`;
const RulerBar = styled.span`
  flex: none;
  width: calc(100% * 16 / ${VISIBLE_STEPS});
  padding-left: 1px;
`;
const StartMarker = styled.span`
  position: absolute;
  left: 0;
  top: 1px;
  border-top: 9px solid #c3e67a;
  border-right: 8px solid transparent;
`;
const CornerColumn = styled.div`
  width: 20px;
  flex: none;
  display: flex;
  flex-direction: column;
`;

const TrackRegion = styled.div`
  flex: 1;
  min-height: 0;
  display: flex;
  border: solid #1b2429;
  border-width: 0 0 1px 1px;
`;
const Headers = styled.div`
  width: 111px;
  flex: none;
  overflow: hidden;
  background: linear-gradient(90deg, #1d2a31 102px, #303c44 103px 109px, #0f171b 109px);
`;
const TrackHeader = styled.div<{ $kind: Track["kind"] }>`
  position: relative;
  display: flex;
  gap: 3px;
  width: 100px;
  height: 82px;
  padding: 1px 6px 0 2px;
  border-radius: 0 9px 9px 0;
  font-size: 14px;
  line-height: 15px;
  color: #dfe7ea;
  background: ${(p) => (p.$kind === "midi" || p.$kind === "sub" ? "linear-gradient(#5c6c73, #53656a)" : "linear-gradient(#4e555a, #444b50)")};
  ${(p) => p.$kind === "sub" && css`
    border-left: 6px solid #30383e;
  `}
  ${(p) => p.$kind === "empty" && css`color: #717d83;`}
`;
const TrackIcon = styled.svg`
  width: 10px;
  height: 10px;
  margin-top: 3px;
  flex: none;
`;
const TrackFoot = styled.div`
  position: absolute;
  right: 5px;
  bottom: 3px;
  width: 82px;
  display: flex;
  align-items: center;
  gap: 6px;
`;
const Dots = styled.svg`
  margin: 8px auto 0 0;
  width: 11px;
  height: 2px;
`;
const Lanes = styled.div`
  position: relative;
  flex: 1;
  min-width: 0;
  overflow: hidden;
  background: linear-gradient(90deg, #32444e calc(100% * 64 / ${VISIBLE_STEPS}), #2c3c47 0);
`;
const GridLines = styled.svg`
  position: absolute;
  inset: 0;
  width: 100%;
  height: 100%;
`;
const Lane = styled.div`
  position: relative;
  height: 82px;
  border-bottom: 2px solid #14222a;
`;
const tones = {
  steel: { head: "linear-gradient(#5e6f76, #4f6067)", edge: "#6b7d84", body: "rgba(45, 58, 58, 0.45)" },
  teal: { head: "linear-gradient(#53807d, #467370)", edge: "#5f918d", body: "rgba(45, 58, 58, 0.45)" },
  brown: { head: "linear-gradient(#82685a, #705647)", edge: "#8f7464", body: "rgba(28, 33, 35, 0.45)" },
};
const ClipBox = styled.div<{ $length: number; $tone: Tone }>`
  width: calc(100% * ${(p) => p.$length} / ${VISIBLE_STEPS});
  height: 82px;
  background: ${(p) => tones[p.$tone].body};
  border-bottom: 2px solid #05090b;
  > svg { width: 100%; height: 63px; }
`;
const ClipHead = styled.div<{ $tone: Tone }>`
  height: 17px;
  display: flex;
  align-items: center;
  gap: 4px;
  padding-left: 2px;
  border: 1px solid ${(p) => tones[p.$tone].edge};
  border-bottom-color: #3f5056;
  border-left: 0;
  border-radius: 0 2px 2px 0;
  background: ${(p) => tones[p.$tone].head};
  font-size: 14px;
  color: #dce5e8;
`;
const VScroll = styled.div`
  width: 20px;
  flex: none;
  display: flex;
  flex-direction: column;
  justify-content: space-between;
  background: ${hatch};
  border-left: 1px solid #1b2429;
`;

const MidiGlyph = () => (
  <svg width="8" height="10" viewBox="0 0 8 10">
    <path d="M0 0H8V10H0V9H5V7H0V6H5V4H0V3H5V1H0Z" fill="#e8f2f5" />
    <path d="M0 1.500H2V2.500H0ZM0 4.500H2V5.500H0ZM0 7.500H2V8.500H0Z" fill="#e8f2f5" />
  </svg>
);

function NoteLines({ notes, length, thick, color }: { notes: Note[]; length: number; thick: number; color: string }) {
  return (
    <svg viewBox={`0 17 ${length} 63`} preserveAspectRatio="none" shapeRendering="crispEdges">
      {notes.map(([x, w, y], i) => <rect key={i} x={x} y={y - thick / 2} width={w} height={thick} fill={color} />)}
    </svg>
  );
}

function ClipView({ clip }: { clip: Clip }) {
  const stroke = clip.tone === "teal" ? "#b4dcda" : "#dcc3b2";
  const fill = clip.tone === "teal" ? "rgba(110,150,150,.28)" : "rgba(150,130,115,.26)";
  return (
    <ClipBox $length={clip.length} $tone={clip.tone}>
      <ClipHead $tone={clip.tone}>
        {clip.line ? <ClipAutoIcon /> : <MidiGlyph />}
        {clip.name}
      </ClipHead>
      {clip.notes && <NoteLines notes={clip.notes} length={clip.length} thick={clip.thick ?? 2} color="#b9cbd3" />}
      {clip.line && (
        <svg viewBox={`0 17 ${clip.length} 64`} preserveAspectRatio="none">
          <path d={`${clip.line} V81 H0Z`} fill={fill} />
          <path d={clip.line} fill="none" stroke={stroke} strokeWidth="1.5" vectorEffect="non-scaling-stroke" />
        </svg>
      )}
    </ClipBox>
  );
}

const gridSteps = Array.from({ length: 105 }, (_, i) => i);
const gridColor = (i: number) => (i % 16 === 0 ? "#14222a" : i % 4 === 0 ? "#20303a" : "#283943");

const plus = <svg width="9" height="9" viewBox="0 0 9 9" stroke="currentColor" strokeWidth="2"><path d="M4.5 0V9M0 4.5H9" /></svg>;

function PlaylistToolbar() {
  const c = "#cbd3d7";
  return (
    <PlaylistTitle>
      <Triangle color={c} size={9} />
      <ToolGroup $ml={4}>
        <button aria-label="Snap">
          <svg width="14" height="15" viewBox="0 0 14 15" fill="none" stroke="#7fe6a2" strokeWidth="3.5"><path d="M2.5 15V7A4.5 4.5 0 0 1 11.5 7V15" /><path d="M0 11.500H14" stroke="#41494e" strokeWidth="1" /></svg>
        </button>
      </ToolGroup>
      <ToolGroup $ml={9}>
        <button aria-label="Draw"><svg width="15" height="15" viewBox="0 0 15 15" fill="none" stroke={c} strokeWidth="1.5"><path d="M1 1L2 6L9 13Q13 14 13.5 10L6 2Z M4 4L11 11M2 6L6 2" /></svg></button>
        <button aria-label="Paint">
          <svg width="16" height="16" viewBox="0 0 16 16" fill="#6bbdf5"><path d="M5 0L9 4L11 9L8 10L6 12L4 9L3 13L0 12L2 7L1 4L5 4Z" /><path d="M8 8L11 7L15 12L14 15L11 15Z" /><path d="M12 11L13.500 13" stroke="#41494e" /></svg>
        </button>
        <button aria-label="Delete"><svg width="13" height="13" viewBox="0 0 13 13" fill="none" stroke={c} strokeWidth="1.8"><circle cx="6.5" cy="6.5" r="5.5" /><path d="M2.5 10.5L10.5 2.5" /></svg></button>
        <button aria-label="Mute"><svg width="15" height="14" viewBox="0 0 15 14"><path d="M0 4H3L8 0V14L3 10H0Z" fill={c} /><path d="M10 5L14 10M14 5L10 10" stroke={c} strokeWidth="1.5" /></svg></button>
        <button aria-label="Slip"><svg width="15" height="12" viewBox="0 0 15 12" fill={c}><path d="M0 6L6 0V5H9V0L15 6L9 12V7H6V12Z" /></svg></button>
        <button aria-label="Slice"><svg width="15" height="14" viewBox="0 0 15 14" fill={c}><path d="M0 0H8V13Q3 8 0 0Z M9 2L14 1V13H10Z" /><path d="M10 4L13 8" stroke="#41494e" /></svg></button>
        <button aria-label="Select"><svg width="14" height="14" viewBox="0 0 14 14" fill="none" stroke={c} strokeWidth="1.8"><path d="M1 5V2Q1 1 2 1H5M9 1H12Q13 1 13 2V5M13 9V12Q13 13 12 13H9M5 13H2Q1 13 1 12V9" /></svg></button>
        <button aria-label="Zoom"><svg width="15" height="15" viewBox="0 0 15 15" fill="none" stroke={c} strokeWidth="1.8"><circle cx="6.5" cy="6.5" r="5.5" /><path d="M6.5 3A3.5 3.5 0 0 0 3 6.5" strokeWidth="1" /><path d="M10.5 10.5L14 14" strokeWidth="3" /></svg></button>
        <button aria-label="Playback"><svg width="15" height="14" viewBox="0 0 15 14"><path d="M0 4H3L8 0V14L3 10H0Z" fill={c} /><path d="M10.5 1V13M13.5 1V13" stroke={c} strokeWidth="1.5" /></svg></button>
      </ToolGroup>
      <ToolGroup $ml={9}>
        <button aria-label="Play"><svg width="14" height="14" viewBox="0 0 14 14"><path d="M1 5H3.5L7.500 1V13L3.5 9H1Z" fill="none" stroke={c} strokeWidth="1.5" /><path d="M9 2L14 7L9 12Z" fill={c} /></svg></button>
      </ToolGroup>
      <h1>Playlist - Arrangement</h1>
      <Triangle color="#8a959a" />
      <span>NeoGM #4 - Volume</span>
      <Triangle color="#8a959a" />
      <WindowControls color="#dfe5e8" />
    </PlaylistTitle>
  );
}

function PlaylistWindow() {
  return (
    <Playlist aria-label="Playlist">
      <PlaylistToolbar />
      <PlaylistBody>
        <Picker>
          <PickerTabs>
            <button aria-label="Patterns"><PianoIcon color="#dfe5e8" size={15} /></button>
            <button aria-label="Audio clips"><WaveIcon color="#535b60" /></button>
            <button aria-label="Automation clips"><AutoIcon color="#535b60" /></button>
          </PickerTabs>
          <PickerMain>
            <PatternList>
              {patterns.map((p) => (
                <PatternItem key={p.name}>
                  <NoteLines notes={p.notes} length={96} thick={5} color="rgba(140,162,168,.3)" />
                  <PatternButton><MidiGlyph />{p.name}</PatternButton>
                  {p.current && (
                    <CurrentMark viewBox="0 0 9 15"><path d="M1 1.500V13.500L8 7.500Z" fill="#ee3447" stroke="#14181b" /></CurrentMark>
                  )}
                </PatternItem>
              ))}
            </PatternList>
            <PickerScroll>
              <SmallButton $w={14} $h={14} aria-label="Scroll patterns"><svg width="2" height="6"><path d="M1 0V6" stroke="currentColor" strokeWidth="2" /></svg></SmallButton>
            </PickerScroll>
          </PickerMain>
          <AddPattern aria-label="Add pattern">{plus}</AddPattern>
        </Picker>
        <Arrangement>
          <TopBar>
            <AddTrack aria-label="Add track">{plus}</AddTrack>
            <ToolBox>
              <ToolIcons><WaveIcon color="#7b8488" /><AutoIcon color="#dfe5e8" /><PianoIcon color="#7b8488" size={15} /></ToolIcons>
              <SnapOptions>
                <label>STEP<StepBox /></label>
                <label>SLIDE<SlideDot /></label>
              </SnapOptions>
            </ToolBox>
            <TimeArea>
              <OverviewRow>
                <SmallButton aria-label="Scroll left"><svg width="6" height="10" viewBox="0 0 6 10" fill="none" stroke="currentColor" strokeWidth="1.5"><path d="M5 0L1 5L5 10" /></svg></SmallButton>
                <Overview>
                  <svg viewBox="0 0 350 18" preserveAspectRatio="none" shapeRendering="crispEdges">
                    <rect width="269" height="18" fill="#5b6f75" />
                    <path d="M0 1.500H350M0 4.500H350M0 7.500H269M0 10.500H269M0 14.500H269" stroke="#87999e" />
                    <path d="M0 12.500H350" stroke="#5fa09b" />
                    <path d="M0 16.500H269" stroke="#a08472" />
                  </svg>
                </Overview>
                <SmallButton aria-label="Scroll right"><svg width="6" height="10" viewBox="0 0 6 10" fill="none" stroke="currentColor" strokeWidth="1.5"><path d="M1 0L5 5L1 10" /></svg></SmallButton>
              </OverviewRow>
              <Ruler>
                {[1, 2, 3, 4, 5, 6, 7].map((n) => <RulerBar key={n}>{n}</RulerBar>)}
                <StartMarker />
              </Ruler>
            </TimeArea>
            <CornerColumn>
              <SmallButton aria-label="View options"><svg width="3" height="5"><rect width="3" height="5" fill="currentColor" /></svg></SmallButton>
              <SmallButton aria-label="Scroll up"><svg width="10" height="6" viewBox="0 0 10 6" fill="none" stroke="currentColor" strokeWidth="1.5"><path d="M0 5L5 1L10 5" /></svg></SmallButton>
            </CornerColumn>
          </TopBar>
          <TrackRegion>
            <Headers>
              {tracks.map((t) => (
                <TrackHeader key={t.name} $kind={t.kind}>
                  {t.kind === "midi" && (
                    <TrackIcon viewBox="0 0 10 10"><circle cx="5" cy="5" r="5" fill="#e8eff1" /><path d="M5 2V8" stroke="#55666c" strokeWidth="1.5" /></TrackIcon>
                  )}
                  <span>{t.name}</span>
                  <TrackFoot>
                    <Dots viewBox="0 0 11 2"><path d="M0 1H2M4 1H6M8 1H10" stroke="#39454b" strokeWidth="2" /></Dots>
                    {t.expand && <svg width="8" height="5" viewBox="0 0 8 5"><path d="M4 0L8 5H0Z" fill="#e8eff1" /></svg>}
                    <Led aria-label={`${t.name} enabled`} />
                  </TrackFoot>
                </TrackHeader>
              ))}
            </Headers>
            <Lanes>
              <GridLines viewBox={`0 0 ${VISIBLE_STEPS} 10`} preserveAspectRatio="none" shapeRendering="crispEdges">
                {gridSteps.map((i) => (
                  <path key={i} d={`M${i} 0V10`} stroke={gridColor(i)} strokeWidth="1" vectorEffect="non-scaling-stroke" />
                ))}
              </GridLines>
              {tracks.map((t) => <Lane key={t.name}>{t.clip && <ClipView clip={t.clip} />}</Lane>)}
            </Lanes>
            <VScroll>
              <SmallButton as="div" $w={19} $h={33} />
              <SmallButton $w={19} aria-label="Scroll down"><svg width="10" height="6" viewBox="0 0 10 6" fill="none" stroke="currentColor" strokeWidth="1.5"><path d="M0 1L5 5L10 1" /></svg></SmallButton>
            </VScroll>
          </TrackRegion>
        </Arrangement>
      </PlaylistBody>
    </Playlist>
  );
}

export default function App() {
  return (
    <>
      <GlobalStyle />
      <Desktop>
        <KnobDefs />
        <MixerWindow />
        <PlaylistWindow />
      </Desktop>
    </>
  );
}
